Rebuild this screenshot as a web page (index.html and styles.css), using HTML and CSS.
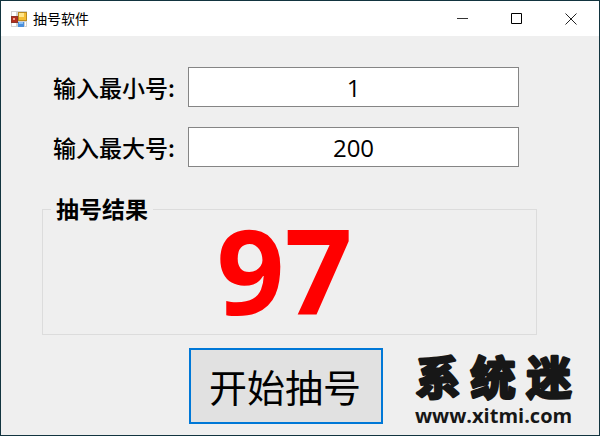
FILE: index.html
```html
<!DOCTYPE html>
<html lang="zh-CN">
<head>
<meta charset="utf-8">
<meta name="viewport" content="width=device-width, initial-scale=1">
<title>抽号软件</title>
<link rel="stylesheet" href="styles.css">
</head>
<body>
<div class="window">
  <header class="titlebar">
    <svg class="app-icon" width="16" height="16" viewBox="0 0 16 16" aria-hidden="true">
      <rect width="16" height="16" fill="#d2d2d2"/>
      <path d="M1 1h4v4H1zM1 12h4v3H1zM14 11h1v4h-1z" fill="#fff"/>
      <rect x="0.500" y="5.500" width="6" height="6" fill="#b52d1c" stroke="#8f3427"/>
      <rect x="2" y="7" width="2" height="2" fill="#f0a08c"/>
      <rect x="7.500" y="1.500" width="8" height="8" fill="#f5bd32" stroke="#b98a1e"/>
      <path d="M8 2h5v4H8z" fill="#ffe58a"/>
      <rect x="7" y="11" width="6" height="5" fill="#4a8fdc"/>
      <path d="M8 11h4v2H8z" fill="#8cc2f5"/>
    </svg>
    <h1 class="title">抽号软件</h1>
    <div class="controls">
      <button class="control" type="button" aria-label="最小化"><svg width="12" height="12" viewBox="0 0 12 12"><path d="M0 5.500h11" stroke="#333"/></svg></button>
      <button class="control" type="button" aria-label="最大化"><svg width="12" height="12" viewBox="0 0 12 12"><path d="M0.500 0.500h10v10h-10z" fill="none" stroke="#000"/></svg></button>
      <button class="control" type="button" aria-label="关闭"><svg width="12" height="12" viewBox="0 0 12 12"><path d="M0.500 0.500l11 11M11.500 0.500l-11 11" stroke="#222"/></svg></button>
    </div>
  </header>
  <main class="content">
    <div class="row">
      <label class="label" for="min">输入最小号:</label>
      <input class="field" id="min" type="text" value="1">
    </div>
    <div class="row">
      <label class="label" for="max">输入最大号:</label>
      <input class="field" id="max" type="text" value="200">
    </div>
    <fieldset class="result">
      <legend class="legend">抽号结果</legend>
      <output class="number">97</output>
    </fieldset>
    <div class="actions">
      <button class="start" type="button">开始抽号</button>
    </div>
  </main>
  <div class="watermark">
    <svg class="brand" width="158" height="54" viewBox="0 0 158 54">
      <text x="23" y="46">系</text>
      <text x="78" y="46">统</text>
      <text x="134" y="46">迷</text>
    </svg>
    <div class="site">www.xitmi.com</div>
  </div>
</div>
</body>
</html>
```

FILE: styles.css
```css
* {
  box-sizing: border-box;
}

body {
  margin: 0;
  font-family: "Open Sans", "Noto Sans CJK SC", sans-serif;
  color: #000;
}

.window {
  position: relative;
  min-height: 100vh;
  border: 1px solid #12343f;
  background: #efefef;
}

.titlebar {
  display: flex;
  align-items: center;
  height: 35px;
  padding: 0 1px 0 10px;
  background: #fff;
}

.title {
  margin: 0 0 0 6px;
  font-size: 14px;
  line-height: 20px;
  font-weight: 400;
}

.controls {
  display: flex;
  margin-left: auto;
}

.control {
  display: flex;
  align-items: center;
  justify-content: center;
  width: 54px;
  height: 35px;
  padding: 0;
  border: 0;
  background: none;
}

.content {
  padding: 31px 62px 10px 41px;
}

.row {
  display: grid;
  grid-template-columns: 135px 1fr;
  align-items: center;
  padding: 0 18px 0 11px;
  margin-bottom: 20px;
}

.label {
  font-family: "Noto Sans CJK SC", sans-serif;
  font-size: 23px;
  line-height: 40px;
  font-weight: 500;
  white-space: nowrap;
}

.field {
  width: 100%;
  height: 40px;
  padding: 0;
  border: 1px solid #858585;
  background: #fff;
  font: 24px "Open Sans", sans-serif;
  color: #000;
  text-align: center;
}

.result {
  min-width: 0;
  margin: 27px 0 0;
  padding: 0 8px;
  border: 1px solid #dcdcdc;
}

.legend {
  padding: 0 5px;
  font-size: 23px;
  line-height: 30px;
  font-weight: 700;
}

.number {
  display: block;
  height: 110px;
  padding-right: 10px;
  font-size: 119px;
  line-height: 90px;
  font-weight: 700;
  color: #f00;
  text-align: center;
}

.actions {
  padding: 13px 0 0 147px;
}

.start {
  padding: 0 20px 0 18px;
  border: 2px solid #0078d7;
  background: #e1e1e1;
  font-family: "Noto Sans CJK SC", sans-serif;
  font-size: 38px;
  line-height: 72px;
  font-weight: 400;
  color: #000;
}

.watermark {
  position: absolute;
  right: 26px;
  bottom: 6px;
  color: #171717;
}

.brand {
  display: block;
  overflow: visible;
  fill: #171717;
  stroke: #171717;
  stroke-width: 3px;
  stroke-linejoin: round;
  font-family: "Noto Sans CJK SC", sans-serif;
  font-size: 45px;
  font-weight: 700;
  text-anchor: middle;
}

.site {
  font-size: 20px;
  line-height: 26px;
  font-weight: 700;
}
```
